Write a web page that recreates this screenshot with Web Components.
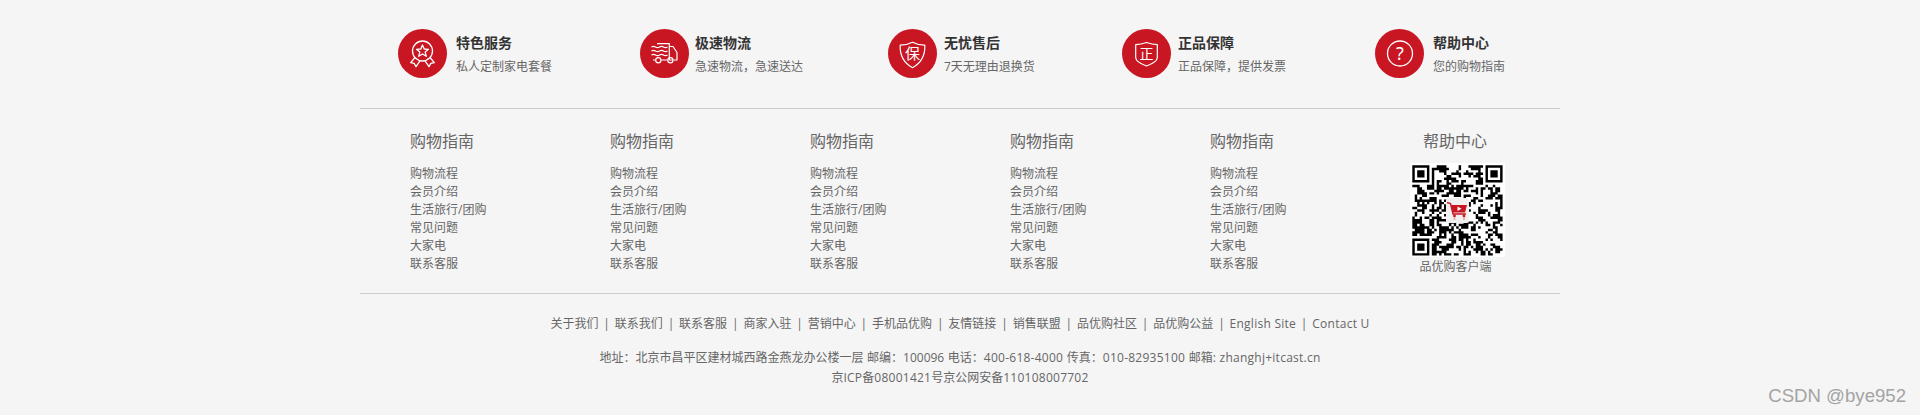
<!DOCTYPE html>
<html lang="zh">
<head>
<meta charset="utf-8">
<title>品优购 footer</title>
<style>
    html, body {
        margin: 0;
        background-color: #f5f5f5;
    }
    .num {
        letter-spacing: .25px;
    }
</style>
</head>
<body>
<site-footer>
    <service-item slot="services" title-text="特色服务" sub-text="私人定制家电套餐" style="--offset: 38px; --gap: 9px; --width: 154px">
        <svg viewBox="0 0 49 49" fill="none" stroke="#fff" stroke-width="1.3" stroke-linejoin="round">
            <circle cx="24.5" cy="22" r="10"/>
            <polygon points="24.5,16 26.2,20 30.5,20.3 27.2,23.1 28.3,27.3 24.5,25 20.7,27.3 21.8,23.1 18.5,20.3 22.8,20"/>
            <polyline points="17,28.5 12.7,33.7 16.2,34.4 18,37.7 22,31.8"/>
            <polyline points="32,28.5 36.3,33.7 32.8,34.4 31,37.7 27,31.8"/>
        </svg>
    </service-item>
    <service-item slot="services" title-text="极速物流" sub-text="急速物流，急速送达" style="--offset: 88px; --gap: 6px; --width: 163px">
        <svg viewBox="0 0 49 49" fill="none" stroke="#fff" stroke-width="1.2" stroke-linejoin="round">
            <path d="M17 14.7H29.3V31H33"/>
            <path d="M29.3 17.5H33L37 23.5V31H33.5"/>
            <path d="M21 31H27.3M13 31H15.5"/>
            <circle cx="18.3" cy="31.3" r="2.6"/>
            <circle cx="30.4" cy="31.3" r="2.6"/>
            <path d="M11.5 18q2-1.4 4 0t4 0 4 0 4 0M11.5 22q2-1.4 4 0t4 0 4 0 4 0M11.5 26q2-1.4 4 0t4 0 4 0 4 0"/>
        </svg>
    </service-item>
    <service-item slot="services" title-text="无忧售后" sub-text="7天无理由退换货" style="--offset: 85px; --gap: 7px; --width: 145px">
        <svg viewBox="0 0 49 49" fill="none" stroke="#fff" stroke-width="1.2" stroke-linejoin="round">
            <path d="M24.5 13.3Q19 16.2 12.2 16.2Q11.5 31.5 24.5 38.7Q37.5 31.5 36.8 16.2Q30 16.2 24.5 13.3Z"/>
            <text x="24.5" y="30" text-anchor="middle" font-family="Noto Sans CJK SC, sans-serif" font-size="15" fill="#fff" stroke="none">保</text>
        </svg>
    </service-item>
    <service-item slot="services" title-text="正品保障" sub-text="正品保障，提供发票" style="--offset: 89px; --gap: 7px; --width: 163px">
        <svg viewBox="0 0 49 49" fill="none" stroke="#fff" stroke-width="1.2" stroke-linejoin="round">
            <path d="M24.5 13.5Q19 15.6 13.7 15.6V28.5Q13.7 33 24.5 37Q35.3 33 35.3 28.5V15.6Q30 15.6 24.5 13.5Z"/>
            <text x="24.5" y="30" text-anchor="middle" font-family="Noto Sans CJK SC, sans-serif" font-size="14" fill="#fff" stroke="none">正</text>
        </svg>
    </service-item>
    <service-item slot="services" title-text="帮助中心" sub-text="您的购物指南" style="--offset: 90px; --gap: 9px; --width: 128px">
        <svg viewBox="0 0 49 49" fill="none" stroke="#fff" stroke-width="1.3">
            <circle cx="25" cy="24.5" r="12.5"/>
            <text x="25" y="31" text-anchor="middle" font-family="Noto Sans, sans-serif" font-size="18" fill="#fff" stroke="none">?</text>
        </svg>
    </service-item>

    <link-column slot="columns" heading="购物指南"></link-column>
    <link-column slot="columns" heading="购物指南"></link-column>
    <link-column slot="columns" heading="购物指南"></link-column>
    <link-column slot="columns" heading="购物指南"></link-column>
    <link-column slot="columns" heading="购物指南"></link-column>
    <help-column slot="columns" heading="帮助中心" caption="品优购客户端"></help-column>

    <footer-links slot="links"></footer-links>
    <div slot="address">地址：北京市昌平区建材城西路金燕龙办公楼一层 邮编：100096 电话：<span class="num">400-618-4000</span> 传真：<span class="num">010-82935100</span> 邮箱: <span class="num">zhanghj+itcast.cn</span></div>
    <div slot="address">京<span class="num">ICP</span>备<span class="num">08001421</span>号京公网安备<span class="num">110108007702</span></div>
</site-footer>
<watermark-label>CSDN @bye952</watermark-label>

<script>
    const FONT = '"Open Sans", "Noto Sans CJK SC", sans-serif';

    class SiteFooter extends HTMLElement {
        constructor() {
            super();
            this.attachShadow({ mode: "open" });
            this.shadowRoot.innerHTML = `
                <style>
                    :host {
                        display: block;
                        width: 1200px;
                        margin: 0 auto;
                        font-family: ${FONT};
                        color: #666;
                        font-size: 12px;
                    }
                    .services {
                        display: flex;
                        box-sizing: border-box;
                        height: 109px;
                        padding-top: 29px;
                        border-bottom: 1px solid #ccc;
                    }
                    .columns {
                        display: flex;
                        box-sizing: border-box;
                        height: 185px;
                        padding: 21px 0 0 50px;
                        border-bottom: 1px solid #ccc;
                    }
                    .links {
                        padding-top: 21px;
                    }
                    .address {
                        margin-top: 15px;
                        text-align: center;
                        line-height: 20px;
                        word-spacing: .5px;
                    }
                </style>
                <div class="services"><slot name="services"></slot></div>
                <div class="columns"><slot name="columns"></slot></div>
                <div class="links"><slot name="links"></slot></div>
                <div class="address"><slot name="address"></slot></div>
            `;
        }
    }

    class ServiceItem extends HTMLElement {
        constructor() {
            super();
            this.attachShadow({ mode: "open" });
            this.shadowRoot.innerHTML = `
                <style>
                    :host {
                        display: flex;
                        flex: none;
                        box-sizing: border-box;
                        width: var(--width);
                        height: 49px;
                        margin-left: var(--offset);
                    }
                    .icon {
                        flex: none;
                        width: 49px;
                        height: 49px;
                        margin-right: var(--gap);
                        border-radius: 50%;
                        background-color: #c81623;
                    }
                    ::slotted(svg) {
                        display: block;
                        width: 49px;
                        height: 49px;
                    }
                    .title {
                        margin-top: 4px;
                        font-size: 14px;
                        line-height: 20px;
                        font-weight: 700;
                        color: #333;
                        white-space: nowrap;
                    }
                    .sub {
                        margin-top: 4px;
                        line-height: 20px;
                        white-space: nowrap;
                    }
                </style>
                <div class="icon"><slot></slot></div>
                <div>
                    <div class="title">${this.getAttribute('title-text')}</div>
                    <div class="sub">${this.getAttribute('sub-text')}</div>
                </div>
            `;
        }
    }

    class LinkColumn extends HTMLElement {
        constructor() {
            super();
            this.attachShadow({ mode: "open" });
            const items = ['购物流程', '会员介绍', '生活旅行/团购', '常见问题', '大家电', '联系客服'];
            this.shadowRoot.innerHTML = `
                <style>
                    :host {
                        display: block;
                        flex: none;
                        width: 200px;
                    }
                    h4 {
                        margin: 0 0 13px;
                        font-size: 16px;
                        line-height: 22px;
                        font-weight: 400;
                    }
                    a {
                        display: block;
                        line-height: 18px;
                        color: #666;
                        text-decoration: none;
                    }
                </style>
                <h4>${this.getAttribute('heading')}</h4>
                ${items.map(i => `<a href="#">${i}</a>`).join('')}
            `;
        }
    }

    class HelpColumn extends HTMLElement {
        constructor() {
            super();
            this.attachShadow({ mode: "open" });
            this.shadowRoot.innerHTML = `
                <style>
                    :host {
                        display: flex;
                        flex-direction: column;
                        align-items: center;
                        flex: none;
                        width: 95px;
                    }
                    h4 {
                        margin: 0 5px 11px 0;
                        font-size: 16px;
                        line-height: 22px;
                        font-weight: 400;
                    }
                    span {
                        margin: 1px 4px 0 0;
                        line-height: 18px;
                        white-space: nowrap;
                    }
                </style>
                <h4>${this.getAttribute('heading')}</h4>
                <qr-code></qr-code>
                <span>${this.getAttribute('caption')}</span>
            `;
        }
    }

    class QrCode extends HTMLElement {
        constructor() {
            super();
            this.attachShadow({ mode: "open" });
            const size = 37;
            const grid = [];
            let seed = 95217;
            const next = () => {
                seed = (seed * 1664525 + 1013904223) % 4294967296;
                return seed / 4294967296;
            };
            for (let y = 0; y < size; y++) {
                grid.push([]);
                for (let x = 0; x < size; x++) {
                    // clumpy noise, real codes have long runs
                    const left = x > 0 ? grid[y][x - 1] : 0;
                    const up = y > 0 ? grid[y - 1][x] : 0;
                    grid[y][x] = next() < 0.36 + 0.18 * left + 0.12 * up ? 1 : 0;
                }
            }
            const finder = (fx, fy) => {
                for (let y = -1; y < 8; y++) {
                    for (let x = -1; x < 8; x++) {
                        const gx = fx + x, gy = fy + y;
                        if (gx < 0 || gy < 0 || gx >= size || gy >= size) continue;
                        const ring = x >= 0 && x < 7 && y >= 0 && y < 7 &&
                            (x === 0 || x === 6 || y === 0 || y === 6 || (x > 1 && x < 5 && y > 1 && y < 5));
                        grid[gy][gx] = ring ? 1 : 0;
                    }
                }
            };
            finder(0, 0);
            finder(size - 7, 0);
            finder(0, size - 7);
            let d = '';
            grid.forEach((row, y) => row.forEach((on, x) => {
                if (on) d += `M${x} ${y}h1v1h-1z`;
            }));
            this.shadowRoot.innerHTML = `
                <style>
                    :host {
                        display: block;
                        width: 95px;
                        height: 94px;
                    }
                    svg {
                        display: block;
                    }
                </style>
                <svg width="95" height="94" viewBox="0 0 95 94">
                    <rect width="95" height="94" fill="#fff"/>
                    <g transform="translate(2.3 2.3) scale(2.44)">
                        <path d="${d}" fill="#000"/>
                    </g>
                    <rect x="36" y="35" width="23" height="25" rx="2" fill="#f0f0f0"/>
                    <path d="M37 39.5l3.5 1 2.5 10.5h13" fill="none" stroke="#c81623" stroke-width="1.4"/>
                    <polygon points="41,42 57,42 55,49.5 43,49.5" fill="#c81623"/>
                    <polygon points="47.5,43.5 47.5,48 51.5,45.7" fill="#fff"/>
                    <circle cx="44.5" cy="53" r="1.4" fill="#c81623"/>
                    <circle cx="54" cy="53" r="1.4" fill="#c81623"/>
                    <circle cx="44.5" cy="56" r="1.1" fill="#e8a8a8"/>
                    <circle cx="54" cy="56" r="1.1" fill="#e8a8a8"/>
                </svg>
            `;
        }
    }

    class FooterLinks extends HTMLElement {
        constructor() {
            super();
            this.attachShadow({ mode: "open" });
            const items = ['关于我们', '联系我们', '联系客服', '商家入驻', '营销中心', '手机品优购', '友情链接', '销售联盟', '品优购社区', '品优购公益', 'English Site', 'Contact U'];
            this.shadowRoot.innerHTML = `
                <style>
                    :host {
                        display: flex;
                        justify-content: center;
                        line-height: 18px;
                        white-space: nowrap;
                    }
                    a {
                        color: #666;
                        text-decoration: none;
                    }
                    a.latin {
                        letter-spacing: .25px;
                    }
                    i {
                        width: 16.3px;
                        text-align: center;
                        font-style: normal;
                    }
                </style>
                ${items.map(i => `<a href="#" class="${/^[A-Z]/.test(i) ? 'latin' : ''}">${i}</a>`).join('<i>|</i>')}
            `;
        }
    }

    class WatermarkLabel extends HTMLElement {
        constructor() {
            super();
            this.attachShadow({ mode: "open" });
            this.shadowRoot.innerHTML = `
                <style>
                    :host {
                        position: absolute;
                        right: 14px;
                        top: 385px;
                        font-family: "Liberation Sans", sans-serif;
                        font-size: 18.6px;
                        line-height: 22px;
                        color: #a3a3a3;
                    }
                </style>
                <slot></slot>
            `;
        }
    }

    customElements.define('site-footer', SiteFooter);
    customElements.define('service-item', ServiceItem);
    customElements.define('link-column', LinkColumn);
    customElements.define('help-column', HelpColumn);
    customElements.define('qr-code', QrCode);
    customElements.define('footer-links', FooterLinks);
    customElements.define('watermark-label', WatermarkLabel);
</script>
</body>
</html>
